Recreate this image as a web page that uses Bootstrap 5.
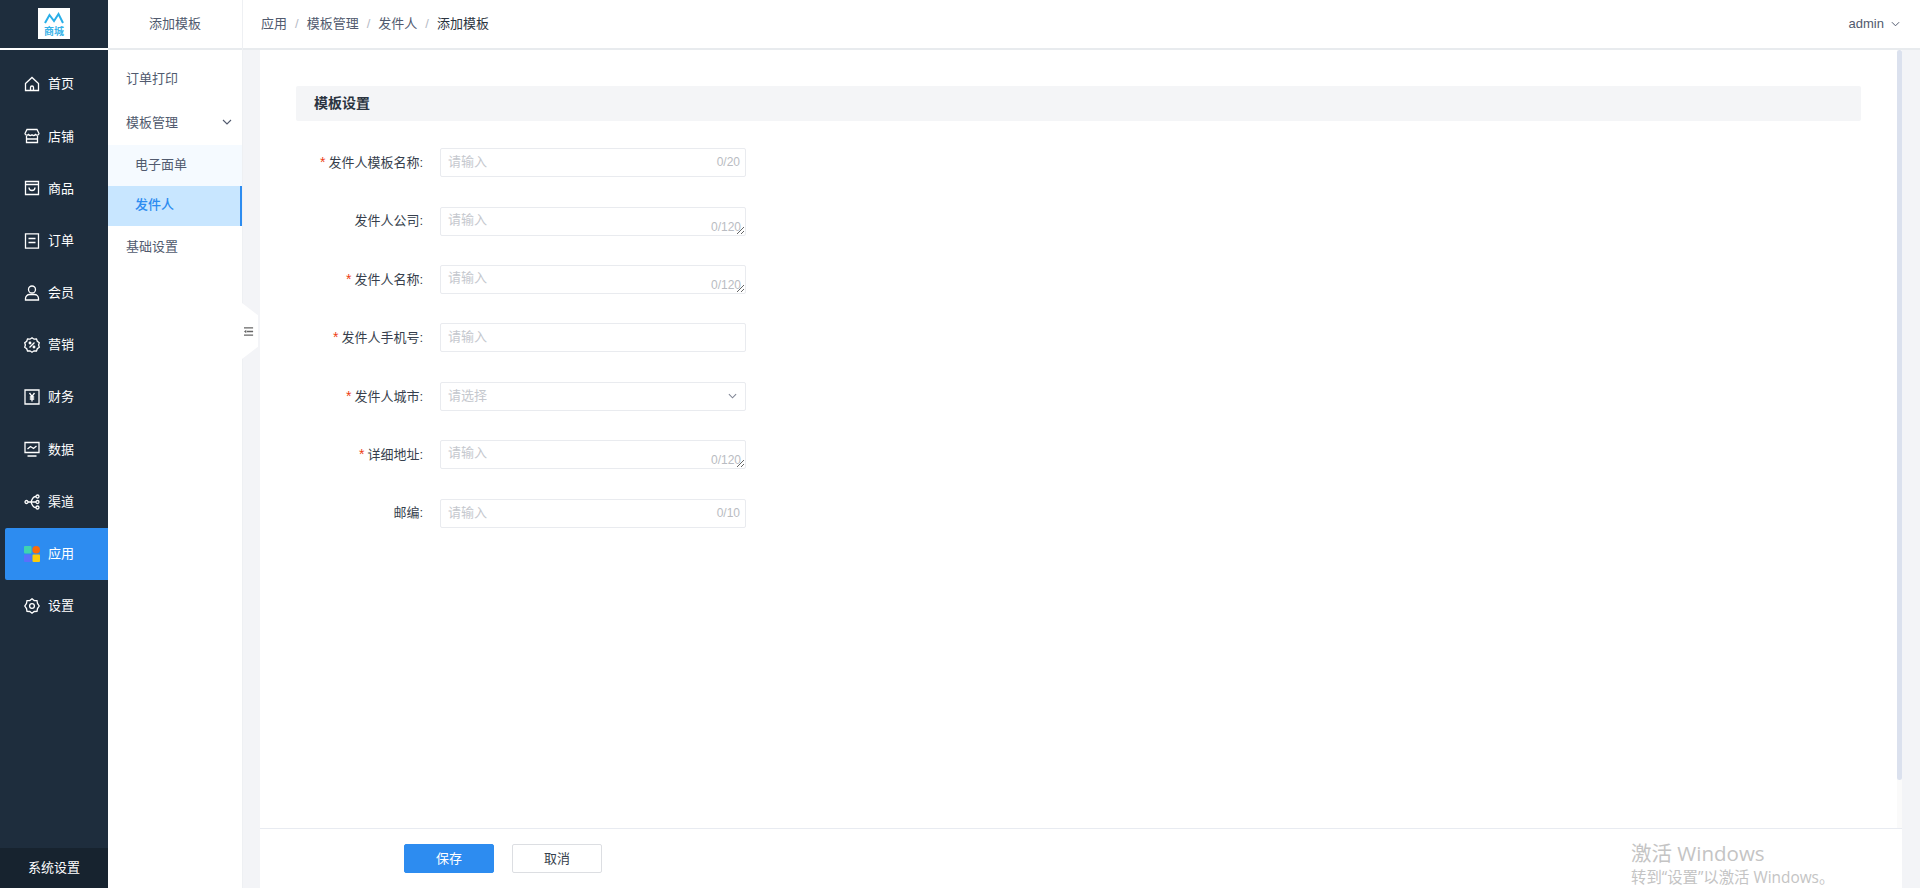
<!DOCTYPE html>
<html lang="zh-CN">
<head>
    <meta charset="UTF-8">
    <title>添加模板</title>
    <link href="https://cdn.jsdelivr.net/npm/bootstrap@5.3.0/dist/css/bootstrap.min.css" rel="stylesheet">
    <style>
        body {
            font-family: "Liberation Sans", "Noto Sans CJK SC", sans-serif;
            font-size: 13px;
            color: #515a6e;
            background: #f3f4f7;
            height: 888px;
            overflow: hidden;
        }
        /* dark rail */
        .side-rail { width: 108px; background: #1e2d3d; }
        .rail-logo { height: 50px; border-bottom: 2px solid #fff; }
        .logo-box { width: 32px; height: 31px; background: #fff; }
        .rail-menu { padding-top: 8px; }
        .rail-item {
            height: 52.2px;
            margin-left: 5px;
            padding-left: 19px;
            gap: 8px;
            color: #fff;
            border-radius: 2px 0 0 2px;
            text-decoration: none;
        }
        .rail-item.is-on { background: #2d8cf0; }
        .rail-item svg { width: 16px; height: 16px; fill: none; stroke: #fff; stroke-width: 1.3; }
        .rail-bottom { height: 40px; background: #17232f; color: #fff; }
        /* second menu */
        .sub-menu { width: 135px; background: #fff; border-right: 1px solid #eef0f3; }
        .sub-head { height: 50px; color: #515a6e; border-bottom: 2px solid #e8ebee; }
        .sub-list { padding-top: 8px; }
        .sub-item { height: 43.5px; padding: 0 10px 2px 18px; color: #515a6e; text-decoration: none; }
        .sub-child { height: 40.5px; padding: 0 0 2px 27px; color: #515a6e; text-decoration: none; background: #f5faff; }
        .sub-child.is-on { background: #c8e6ff; color: #2d8cf0; font-weight: 500; border-right: 2px solid #2d8cf0; }
        .fold-tab {
            left: 242px; top: 303px; width: 16px; height: 56px;
            padding-left: 2px;
            background: #fff;
            clip-path: polygon(0 0, 100% 22%, 100% 78%, 0 100%);
        }
        /* top bar */
        .top-bar { height: 50px; background: #fff; border-bottom: 2px solid #e8ebee; padding: 0 20px 0 18px; }
        .top-crumb { --bs-breadcrumb-margin-bottom: 0; --bs-breadcrumb-item-padding-x: 8px; --bs-breadcrumb-divider-color: #b6bbc6; font-size: 13px; }
        .top-crumb a { color: #515a6e; text-decoration: none; }
        .top-crumb .active { color: #2b3440; }
        .top-user { color: #515a6e; gap: 7px; }
        /* main panel */
        .main-wrap { padding: 0 18px 0 17px; min-height: 0; }
        .main-scroll { min-height: 0; }
        .form-pane { padding: 36px 36px 0 36px; }
        .scroll-track { width: 5px; background: #fafafa; }
        .scroll-thumb { height: 730px; background: #dbe1ee; border-radius: 3px; }
        .block-title { height: 35px; padding-left: 18px; background: #f4f5f7; color: #2b3440; font-weight: 700; font-size: 14px; border-radius: 2px; }
        .form-list { margin-top: 27.2px; gap: 29.4px; }
        .form-line { height: 29px; }
        .line-label { width: 127px; margin-right: 17px; text-align: right; color: #373f4d; }
        .req-mark { color: #ed4014; margin-right: 3px; font-size: 14px; font-weight: 500; }
        .line-field { width: 306px; height: 29px; }
        .line-field .form-control, .line-field .form-select {
            height: 29px; min-height: 29px;
            padding: 0 7px 2px;
            font-size: 13px;
            border: 1px solid #e9ebef;
            border-radius: 2px;
            color: #515a6e;
        }
        .line-field textarea.form-control { padding: 3px 7px; line-height: 18px; }
        .line-field .form-select {
            color: #c5c8ce;
            background-image: url("data:image/svg+xml,%3Csvg xmlns='http://www.w3.org/2000/svg' viewBox='0 0 10 6'%3E%3Cpath d='M1 1l4 4 4-4' fill='none' stroke='%23808695' stroke-width='1.2'/%3E%3C/svg%3E");
            background-size: 9px 6px;
            background-position: right 8px center;
        }
        .form-control::placeholder { color: #c5c8ce; opacity: 1; }
        .count-tag { right: 6px; top: 7px; font-size: 12px; color: #b9bcc2; line-height: 14px; }
        .count-tag.low { top: 13px; right: 5px; }
        .bottom-bar { height: 60px; background: #fff; border-top: 1px solid #e8ebf1; padding: 15px 0 0 144px; gap: 18px; }
        .bottom-bar .btn { width: 90px; height: 29px; padding: 0; font-size: 13px; border-radius: 2px; }
        .btn-save { background: #2d8cf0; border-color: #2d8cf0; color: #fff; }
        .btn-drop { background: #fff; border: 1px solid #dcdee2; color: #373f4d; }
        /* windows watermark lies over everything */
        .win-mark { left: 1631px; top: 840px; color: #c4c4c4; font-family: "Open Sans", "Noto Sans CJK SC", sans-serif; pointer-events: none; }
        .win-big { font-size: 20.5px; line-height: 27px; }
        .win-small { font-size: 15.4px; line-height: 21px; }
    </style>
</head>
<body class="d-flex position-relative">
    <!-- Dark rail -->
    <aside class="side-rail d-flex flex-column flex-shrink-0">
        <div class="rail-logo d-flex justify-content-center pt-2">
            <div class="logo-box">
                <svg width="32" height="31" viewBox="0 0 32 31">
                    <path d="M7 15l4.500-8 4.500 6 4.500-7 4.500 9" fill="none" stroke="#29aee8" stroke-width="2"/>
                    <text x="16" y="26.500" text-anchor="middle" font-size="10" font-weight="700" fill="#38b2e8" font-family="Noto Sans CJK SC, sans-serif">商城</text>
                </svg>
            </div>
        </div>
        <nav class="rail-menu nav flex-column flex-grow-1 flex-nowrap">
            <a class="rail-item d-flex align-items-center" href="#">
                <svg viewBox="0 0 16 16"><path d="M1.500 7.500L8 1.500l6.500 6v7h-13zM6.500 14.500v-3a1.500 1.500 0 0 1 3 0v3"/></svg>首页</a>
            <a class="rail-item d-flex align-items-center" href="#">
                <svg viewBox="0 0 16 16"><path d="M3 1.500h10l2 4a2 2 0 0 1-3.500 1 2.500 2.500 0 0 1-3.500.3 2.500 2.500 0 0 1-3.500-.3A2 2 0 0 1 1 5.500zM2.500 8v6.500h11V8M2.500 11h11"/></svg>店铺</a>
            <a class="rail-item d-flex align-items-center" href="#">
                <svg viewBox="0 0 16 16"><path d="M1.500 1.500h13v13h-13zM1.500 4.500h13M5 7.500a3 3 0 0 0 6 0"/></svg>商品</a>
            <a class="rail-item d-flex align-items-center" href="#">
                <svg viewBox="0 0 16 16"><path d="M1.500.8h13v14.400h-13zM4.500 5.500h7M4.500 9.500h7"/></svg>订单</a>
            <a class="rail-item d-flex align-items-center" href="#">
                <svg viewBox="0 0 16 16"><circle cx="8" cy="4.500" r="3.500"/><path d="M1.500 15v-1.500a4 4 0 0 1 4-4h5a4 4 0 0 1 4 4V15z"/></svg>会员</a>
            <a class="rail-item d-flex align-items-center" href="#">
                <svg viewBox="0 0 16 16"><path d="M8 .8l2 1.400 2.500-.2.800 2.300 2 1.500-.7 2.200.7 2.200-2 1.500-.8 2.300-2.500-.2-2 1.400-2-1.400-2.500.2-.8-2.300-2-1.500.7-2.200-.7-2.200 2-1.500.8-2.300 2.500.2zM5.500 10.500l5-5"/><circle cx="6" cy="6" r=".8"/><circle cx="10" cy="10" r=".8"/></svg>营销</a>
            <a class="rail-item d-flex align-items-center" href="#">
                <svg viewBox="0 0 16 16"><path d="M1 1h14v14H1zM5.500 4l2.500 3.500L10.500 4M8 7.500V12.500M5.800 8h4.400M5.800 10h4.400"/></svg>财务</a>
            <a class="rail-item d-flex align-items-center" href="#">
                <svg viewBox="0 0 16 16"><path d="M1 1.500h14v10H1zM3.500 15h9M3.500 8l3-2.500 3 2 3-2.500"/></svg>数据</a>
            <a class="rail-item d-flex align-items-center" href="#">
                <svg viewBox="0 0 16 16"><circle cx="2.500" cy="8" r="1.500"/><circle cx="13.500" cy="2.500" r="1.500"/><circle cx="13.500" cy="8" r="1.500"/><circle cx="13.500" cy="13.500" r="1.500"/><path d="M4 8h8M6.500 8c1.500 0 1-5.500 5.500-5.500M6.500 8c1.500 0 1 5.500 5.500 5.500"/></svg>渠道</a>
            <a class="rail-item is-on d-flex align-items-center" href="#">
                <svg viewBox="0 0 16 16"><rect x="0" y="0" width="7.500" height="7.500" rx="1" fill="#3fd3b0" stroke="none"/><circle cx="12.200" cy="3.800" r="3.800" fill="#fb6b0a" stroke="none"/><rect x="0" y="8.500" width="7.500" height="7.500" rx="1" fill="#5a6ffb" stroke="none"/><rect x="8.500" y="8.500" width="7.500" height="7.500" rx="1" fill="#fbcb0a" stroke="none"/></svg>应用</a>
            <a class="rail-item d-flex align-items-center" href="#">
                <svg viewBox="0 0 16 16"><path d="M8 .8l2.200 1.700 2.800.2.500 2.700L15.200 8l-1.700 2.600-.5 2.700-2.800.2L8 15.200l-2.200-1.700-2.800-.2-.5-2.700L.8 8l1.700-2.600.5-2.700 2.800-.2z"/><circle cx="8" cy="8" r="2.400"/></svg>设置</a>
        </nav>
        <div class="rail-bottom d-flex align-items-center justify-content-center">系统设置</div>
    </aside>

    <!-- Second menu -->
    <aside class="sub-menu d-flex flex-column flex-shrink-0">
        <div class="sub-head d-flex align-items-center justify-content-center">添加模板</div>
        <nav class="sub-list d-flex flex-column">
            <a class="sub-item d-flex align-items-center" href="#">订单打印</a>
            <a class="sub-item d-flex align-items-center justify-content-between" href="#">模板管理
                <svg width="10" height="6" viewBox="0 0 10 6"><path d="M1 1l4 4 4-4" fill="none" stroke="#515a6e" stroke-width="1.100"/></svg>
            </a>
            <a class="sub-child d-flex align-items-center" href="#">电子面单</a>
            <a class="sub-child is-on d-flex align-items-center" href="#">发件人</a>
            <a class="sub-item d-flex align-items-center" href="#">基础设置</a>
        </nav>
    </aside>
    <div class="fold-tab position-absolute d-flex align-items-center">
        <svg width="10" height="11" viewBox="0 0 11 11"><path d="M0 1.500h10M3 5.500h7M0 9.500h10" stroke="#666" stroke-width="1.400" fill="none"/><path d="M0 5.500l2.500-1.800v3.600z" fill="#666"/></svg>
    </div>

    <!-- Right side -->
    <div class="d-flex flex-column flex-grow-1" style="min-width:0">
        <header class="top-bar d-flex align-items-center justify-content-between flex-shrink-0">
            <nav aria-label="breadcrumb">
                <ol class="breadcrumb top-crumb">
                    <li class="breadcrumb-item"><a href="#">应用</a></li>
                    <li class="breadcrumb-item"><a href="#">模板管理</a></li>
                    <li class="breadcrumb-item"><a href="#">发件人</a></li>
                    <li class="breadcrumb-item active" aria-current="page">添加模板</li>
                </ol>
            </nav>
            <div class="top-user d-flex align-items-center">admin
                <svg width="9" height="6" viewBox="0 0 10 6"><path d="M1 1l4 4 4-4" fill="none" stroke="#515a6e" stroke-width="1.100"/></svg>
            </div>
        </header>

        <div class="main-wrap d-flex flex-column flex-grow-1">
            <div class="main-scroll d-flex flex-grow-1 bg-white">
                <div class="form-pane flex-grow-1">
                    <div class="block-title d-flex align-items-center">模板设置</div>
                    <form class="form-list d-flex flex-column">
                        <div class="form-line d-flex align-items-center">
                            <label class="line-label"><span class="req-mark">*</span>发件人模板名称:</label>
                            <div class="line-field position-relative">
                                <input class="form-control" placeholder="请输入">
                                <span class="count-tag position-absolute">0/20</span>
                            </div>
                        </div>
                        <div class="form-line d-flex align-items-center">
                            <label class="line-label">发件人公司:</label>
                            <div class="line-field position-relative">
                                <textarea class="form-control" placeholder="请输入"></textarea>
                                <span class="count-tag low position-absolute">0/120</span>
                            </div>
                        </div>
                        <div class="form-line d-flex align-items-center">
                            <label class="line-label"><span class="req-mark">*</span>发件人名称:</label>
                            <div class="line-field position-relative">
                                <textarea class="form-control" placeholder="请输入"></textarea>
                                <span class="count-tag low position-absolute">0/120</span>
                            </div>
                        </div>
                        <div class="form-line d-flex align-items-center">
                            <label class="line-label"><span class="req-mark">*</span>发件人手机号:</label>
                            <div class="line-field">
                                <input class="form-control" placeholder="请输入">
                            </div>
                        </div>
                        <div class="form-line d-flex align-items-center">
                            <label class="line-label"><span class="req-mark">*</span>发件人城市:</label>
                            <div class="line-field">
                                <select class="form-select"><option>请选择</option></select>
                            </div>
                        </div>
                        <div class="form-line d-flex align-items-center">
                            <label class="line-label"><span class="req-mark">*</span>详细地址:</label>
                            <div class="line-field position-relative">
                                <textarea class="form-control" placeholder="请输入"></textarea>
                                <span class="count-tag low position-absolute">0/120</span>
                            </div>
                        </div>
                        <div class="form-line d-flex align-items-center">
                            <label class="line-label">邮编:</label>
                            <div class="line-field position-relative">
                                <input class="form-control" placeholder="请输入">
                                <span class="count-tag position-absolute">0/10</span>
                            </div>
                        </div>
                    </form>
                </div>
                <div class="scroll-track flex-shrink-0"><div class="scroll-thumb"></div></div>
            </div>
            <div class="bottom-bar d-flex flex-shrink-0">
                <button type="button" class="btn btn-save">保存</button>
                <button type="button" class="btn btn-drop">取消</button>
            </div>
        </div>
    </div>

    <div class="win-mark position-absolute">
        <div class="win-big">激活 Windows</div>
        <div class="win-small">转到“设置”以激活 Windows。</div>
    </div>

    <script src="https://cdn.jsdelivr.net/npm/bootstrap@5.3.0/dist/js/bootstrap.bundle.min.js"></script>
</body>
</html>
